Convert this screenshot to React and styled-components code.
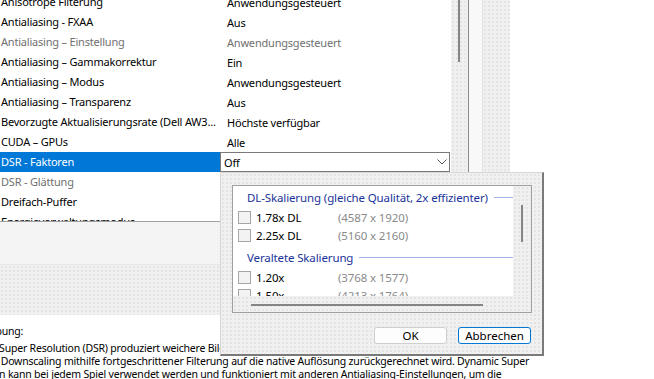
import React from "react";
import styled, { createGlobalStyle } from "styled-components";

const GlobalStyle = createGlobalStyle`
  html, body { margin: 0; padding: 0; background: #fff; }
  body {
    font-family: "Noto Sans", "Open Sans", sans-serif;
    font-size: 11px;
    color: #000;
  }
  * { box-sizing: border-box; }
`;

const dots = `
  background-color: #f0f0f0;
  background-image: radial-gradient(#e3e3e3 0.7px, transparent 0.8px);
  background-size: 4px 4px;
`;

const Page = styled.div`
  position: relative;
  width: 654px;
  height: 379px;
  overflow: hidden;
  background: #fff;
`;

const Top = styled.div`
  display: flex;
  height: 315px;
`;

const LeftPane = styled.div`
  width: 468px;
  display: flex;
  flex-direction: column;
`;

const ListArea = styled.div`
  display: flex;
  height: 222px;
  border-bottom: 1px solid #a0a0a0;
`;

const List = styled.div`
  flex: 1;
  overflow: hidden;
  background: #fff;
  letter-spacing: -0.2px;
`;

const Rows = styled.div`
  margin-top: -8px;
`;

const Row = styled.div`
  display: grid;
  grid-template-columns: 220px 1fr;
  height: 20px;
  align-items: center;
  white-space: nowrap;
`;

const NameCell = styled.div`
  height: 20px;
  line-height: 20px;
  padding-left: 1px;
  overflow: hidden;
  background: ${(p) => (p.$selected ? "#0078d7" : "transparent")};
  color: ${(p) => (p.$selected ? "#fff" : p.$dim ? "#707070" : "#000")};
`;

const ValueCell = styled.div`
  padding-left: 7px;
  color: ${(p) => (p.$dim ? "#707070" : "#000")};
`;

const Combo = styled.div`
  width: 230px;
  height: 20px;
  border: 1px solid #7a7a7a;
  background: #fff;
  display: flex;
  align-items: center;
  justify-content: space-between;
  padding: 0 2px 0 3px;
`;

const VScroll = styled.div`
  width: 17px;
  ${dots}
  display: flex;
`;

const VThumb = styled.div`
  margin-left: ${(p) => p.$left}px;
  margin-top: ${(p) => p.$top}px;
  width: 2px;
  height: ${(p) => p.$h}px;
  background: #858585;
`;

const BandLight = styled.div`
  height: 43px;
  background: #f4f4f4;
  border-bottom: 1px solid #e8e8e8;
`;

const BandDotted = styled.div`
  flex: 1;
  ${dots}
`;

const StripA = styled.div`
  width: 15px;
  background: #f8f8f8;
  border-left: 1px solid #8a8a8a;
  border-right: 1px solid #e2e2e2;
`;

const StripB = styled.div`
  width: 27px;
  ${dots}
`;

const Desc = styled.div`
  overflow: hidden;
  padding-top: 10px;
`;

const DescInner = styled.div`
  margin-left: -45px;
  white-space: nowrap;
  line-height: 13px;
  font-size: 10.5px;
  letter-spacing: -0.2px;
`;

const DescLine = styled.div`
  margin-bottom: ${(p) => (p.$gap ? "4px" : "0")};
`;

const Dialog = styled.div`
  position: absolute;
  left: 220px;
  top: 172px;
  width: 324px;
  height: 184px;
  ${dots}
  border-left: 1px solid #d6d6d6;
  border-top: 1px solid #d6d6d6;
  border-right: 2px solid #7a7a7a;
  border-bottom: 2px solid #7a7a7a;
  padding: 12px 11px 0 11px;
  display: flex;
  flex-direction: column;
`;

const Frame = styled.div`
  width: 300px;
  height: 128px;
  border: 1px solid #a0a0a0;
  display: grid;
  grid-template-columns: 280px 18px;
  grid-template-rows: 110px 16px;
`;

const ListBox = styled.div`
  background: #fff;
  overflow: hidden;
  font-size: 11.5px;
  letter-spacing: -0.12px;
`;

const GroupHeader = styled.div`
  display: flex;
  align-items: center;
  height: 22px;
  margin-top: ${(p) => (p.$first ? 0 : 2)}px;
  padding-left: 14px;
  color: #1a3399;
  white-space: nowrap;
`;

const HeaderLine = styled.div`
  flex: 1;
  height: 1px;
  margin-left: 6px;
  background: #a3b4e6;
`;

const CheckRow = styled.div`
  display: flex;
  align-items: center;
  height: 18px;
  padding-left: 5px;
  white-space: nowrap;
`;

const Box = styled.span`
  display: block;
  width: 13px;
  height: 13px;
  border: 1px solid #a6a6a6;
  background: #f3f3f3;
  flex: none;
`;

const CheckLabel = styled.span`
  display: block;
  flex: none;
  width: 82px;
  margin-left: 5px;
`;

const Res = styled.span`
  color: #8a8a8a;
`;

const ScrollTrack = styled.div`
  ${dots}
  display: flex;
`;

const HThumb = styled.div`
  margin-left: 18px;
  margin-top: 8px;
  width: 232px;
  height: 2px;
  background: #858585;
`;

const Corner = styled.div`
  ${dots}
`;

const Buttons = styled.div`
  display: flex;
  justify-content: flex-end;
  gap: 11px;
  margin-top: 14px;
`;

const Button = styled.button`
  width: 73px;
  height: 17px;
  padding: 0;
  font: inherit;
  font-size: 11.5px;
  line-height: 15px;
  color: #000;
  border-radius: 3px;
  background: ${(p) => (p.$primary ? "#fff" : "#fdfdfd")};
  border: 1px solid ${(p) => (p.$primary ? "#0078d7" : "#cfcfcf")};
`;

const Chevron = () => (
  <svg width="10" height="6" viewBox="0 0 10 6">
    <path d="M0.5 0.5 L5 5 L9.5 0.5" fill="none" stroke="#555" strokeWidth="1" />
  </svg>
);

const rows = [
  { name: "Anisotrope Filterung", value: "Anwendungsgesteuert" },
  { name: "Antialiasing - FXAA", value: "Aus" },
  { name: "Antialiasing – Einstellung", value: "Anwendungsgesteuert", dim: true },
  { name: "Antialiasing – Gammakorrektur", value: "Ein" },
  { name: "Antialiasing – Modus", value: "Anwendungsgesteuert" },
  { name: "Antialiasing – Transparenz", value: "Aus" },
  { name: "Bevorzugte Aktualisierungsrate (Dell AW3...", value: "Höchste verfügbar" },
  { name: "CUDA – GPUs", value: "Alle" },
  { name: "DSR - Faktoren", value: "Off", selected: true },
  { name: "DSR - Glättung", value: "Aus", dim: true },
  { name: "Dreifach-Puffer", value: "Aus" },
  { name: "Energieverwaltungsmodus", value: "Normal" },
];

const groups = [
  {
    title: "DL-Skalierung (gleiche Qualität, 2x effizienter)",
    items: [
      ["1.78x DL", "(4587 x 1920)"],
      ["2.25x DL", "(5160 x 2160)"],
    ],
  },
  {
    title: "Veraltete Skalierung",
    items: [
      ["1.20x", "(3768 x 1577)"],
      ["1.50x", "(4213 x 1764)"],
    ],
  },
];

export default function App() {
  return (
    <>
      <GlobalStyle />
      <Page>
        <Top>
          <LeftPane>
            <ListArea>
              <List>
                <Rows>
                  {rows.map((r) => (
                    <Row key={r.name}>
                      <NameCell $selected={r.selected} $dim={r.dim}>
                        {r.name}
                      </NameCell>
                      {r.selected ? (
                        <Combo>
                          <span>{r.value}</span>
                          <Chevron />
                        </Combo>
                      ) : (
                        <ValueCell $dim={r.dim}>{r.value}</ValueCell>
                      )}
                    </Row>
                  ))}
                </Rows>
              </List>
              <VScroll>
                <VThumb $left={7} $top={0} $h={62} />
              </VScroll>
            </ListArea>
            <BandLight />
            <BandDotted />
          </LeftPane>
          <StripA />
          <StripB />
        </Top>
        <Desc>
          <DescInner>
            <DescLine $gap>Beschreibung:</DescLine>
            <DescLine>
              Dynamic Super Resolution (DSR) produziert weichere Bilder, indem ein Spiel in einer höheren Auflösung gerendert und
            </DescLine>
            <DescLine>
              dann per Downscaling mithilfe fortgeschrittener Filterung auf die native Auflösung zurückgerechnet wird. Dynamic Super
            </DescLine>
            <DescLine>
              Resolution kann bei jedem Spiel verwendet werden und funktioniert mit anderen Antialiasing-Einstellungen, um die
            </DescLine>
          </DescInner>
        </Desc>

        <Dialog>
          <Frame>
            <ListBox>
              {groups.map((g, gi) => (
                <React.Fragment key={g.title}>
                  <GroupHeader $first={gi === 0}>
                    {g.title}
                    <HeaderLine />
                  </GroupHeader>
                  {g.items.map(([label, res]) => (
                    <CheckRow key={label}>
                      <Box />
                      <CheckLabel>{label}</CheckLabel>
                      <Res>{res}</Res>
                    </CheckRow>
                  ))}
                </React.Fragment>
              ))}
            </ListBox>
            <ScrollTrack>
              <VThumb $left={8} $top={19} $h={37} />
            </ScrollTrack>
            <ScrollTrack>
              <HThumb />
            </ScrollTrack>
            <Corner />
          </Frame>
          <Buttons>
            <Button>OK</Button>
            <Button $primary>Abbrechen</Button>
          </Buttons>
        </Dialog>
      </Page>
    </>
  );
}
